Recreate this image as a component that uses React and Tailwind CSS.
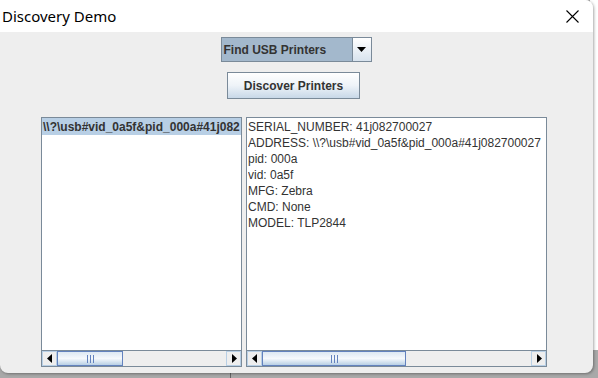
import React from 'react';

const lines = [
    'SERIAL_NUMBER: 41j082700027',
    'ADDRESS: \\\\?\\usb#vid_0a5f&pid_000a#41j082700027',
    'pid: 000a',
    'vid: 0a5f',
    'MFG: Zebra',
    'CMD: None',
    'MODEL: TLP2844',
];

const Arrow = ({ dir }) => (
    <div className="w-[15px] h-full flex items-center justify-center bg-[#eeeeee] border border-[#b8cfe5]">
        <svg width="6" height="9" viewBox="0 0 6 9">
            {dir === 'left'
                ? <path d="M5 0 L0 4.5 L5 9 Z" fill="#000" />
                : <path d="M1 0 L6 4.5 L1 9 Z" fill="#000" />}
        </svg>
    </div>
);

const HScroll = ({ thumb }) => (
    <div className="h-[16px] flex border-t border-[#7a8a99] bg-[#eeeeee]">
        <Arrow dir="left" />
        <div className="flex-1 flex">
            <div className={`${thumb} h-full border border-[#6382be] bg-gradient-to-b from-[#dde8f3] via-[#f6f9fc] to-[#b8cfe5] flex items-center justify-center gap-[2px]`}>
                <div className="w-px h-[8px] bg-[#6382be]" />
                <div className="w-px h-[8px] bg-[#6382be]" />
                <div className="w-px h-[8px] bg-[#6382be]" />
            </div>
        </div>
        <Arrow dir="right" />
    </div>
);

export default function App() {
    return (
        <div className="w-[598px] h-[378px] bg-[#a9a9a9] relative overflow-hidden" style={{ fontFamily: '"Liberation Sans", Arial, sans-serif' }}>
            <div className="absolute right-0 top-0 w-[8px] h-[350px] bg-white" />
            <div className="absolute left-[230px] top-[372px] w-px h-[6px] bg-[#666]" />
            <div className="relative w-[593px] h-[373px] rounded-b-[8px] rounded-tr-[8px] bg-[#eeeeee] shadow-[1px_1px_3px_rgba(0,0,0,0.35)] overflow-hidden flex flex-col">
                <div className="h-[32px] bg-white flex items-center justify-between pl-[2px] pr-[14px] shrink-0">
                    <span className="text-[15px] text-black" style={{ fontFamily: '"Noto Sans", "Open Sans", sans-serif' }}>Discovery Demo</span>
                    <svg width="13" height="13" viewBox="0 0 13 13">
                        <path d="M0.5 0.5 L12.5 12.5 M12.5 0.5 L0.5 12.5" stroke="#000" strokeWidth="1.1" />
                    </svg>
                </div>
                <div className="flex flex-col items-center pt-[5px]">
                    <div className="flex w-[151px] h-[25px] border border-[#7a8a99] ml-[-1px]">
                        <div className="flex-1 bg-[#a3b8cc] flex items-center pl-[2px] text-[12px] font-bold text-[#333]">Find USB Printers</div>
                        <div className="w-[19px] border-l border-[#7a8a99] bg-gradient-to-b from-white to-[#d8e3ee] flex items-center justify-center">
                            <svg width="9" height="5" viewBox="0 0 9 5"><path d="M0 0 H9 L4.5 5 Z" fill="#000" /></svg>
                        </div>
                    </div>
                    <div className="mt-[10px] ml-[-6px] w-[133px] h-[27px] border border-[#7a8a99] bg-gradient-to-b from-white via-[#eef3f8] to-[#c8d8e8] flex items-center justify-center text-[12px] font-bold text-[#333]">
                        Discover Printers
                    </div>
                </div>
                <div className="flex gap-[4px] mt-[18px] ml-[41px]">
                    <div className="w-[201px] h-[250px] border border-[#7a8a99] bg-white flex flex-col">
                        <div className="flex-1 overflow-hidden">
                            <div className="h-[17px] bg-[#b8cfe5] flex items-center pl-px text-[12px] font-bold text-[#333] whitespace-nowrap overflow-hidden">\\?\usb#vid_0a5f&amp;pid_000a#41j082</div>
                        </div>
                        <HScroll thumb="w-[66px]" />
                    </div>
                    <div className="w-[301px] h-[250px] border border-[#7a8a99] bg-white flex flex-col">
                        <div className="flex-1 overflow-hidden pt-[1px] pl-px">
                            {lines.map(l => (
                                <div key={l} className="h-[16px] leading-[16px] text-[12px] text-[#333] whitespace-nowrap overflow-hidden">{l}</div>
                            ))}
                        </div>
                        <HScroll thumb="w-[144px]" />
                    </div>
                </div>
            </div>
        </div>
    );
}
